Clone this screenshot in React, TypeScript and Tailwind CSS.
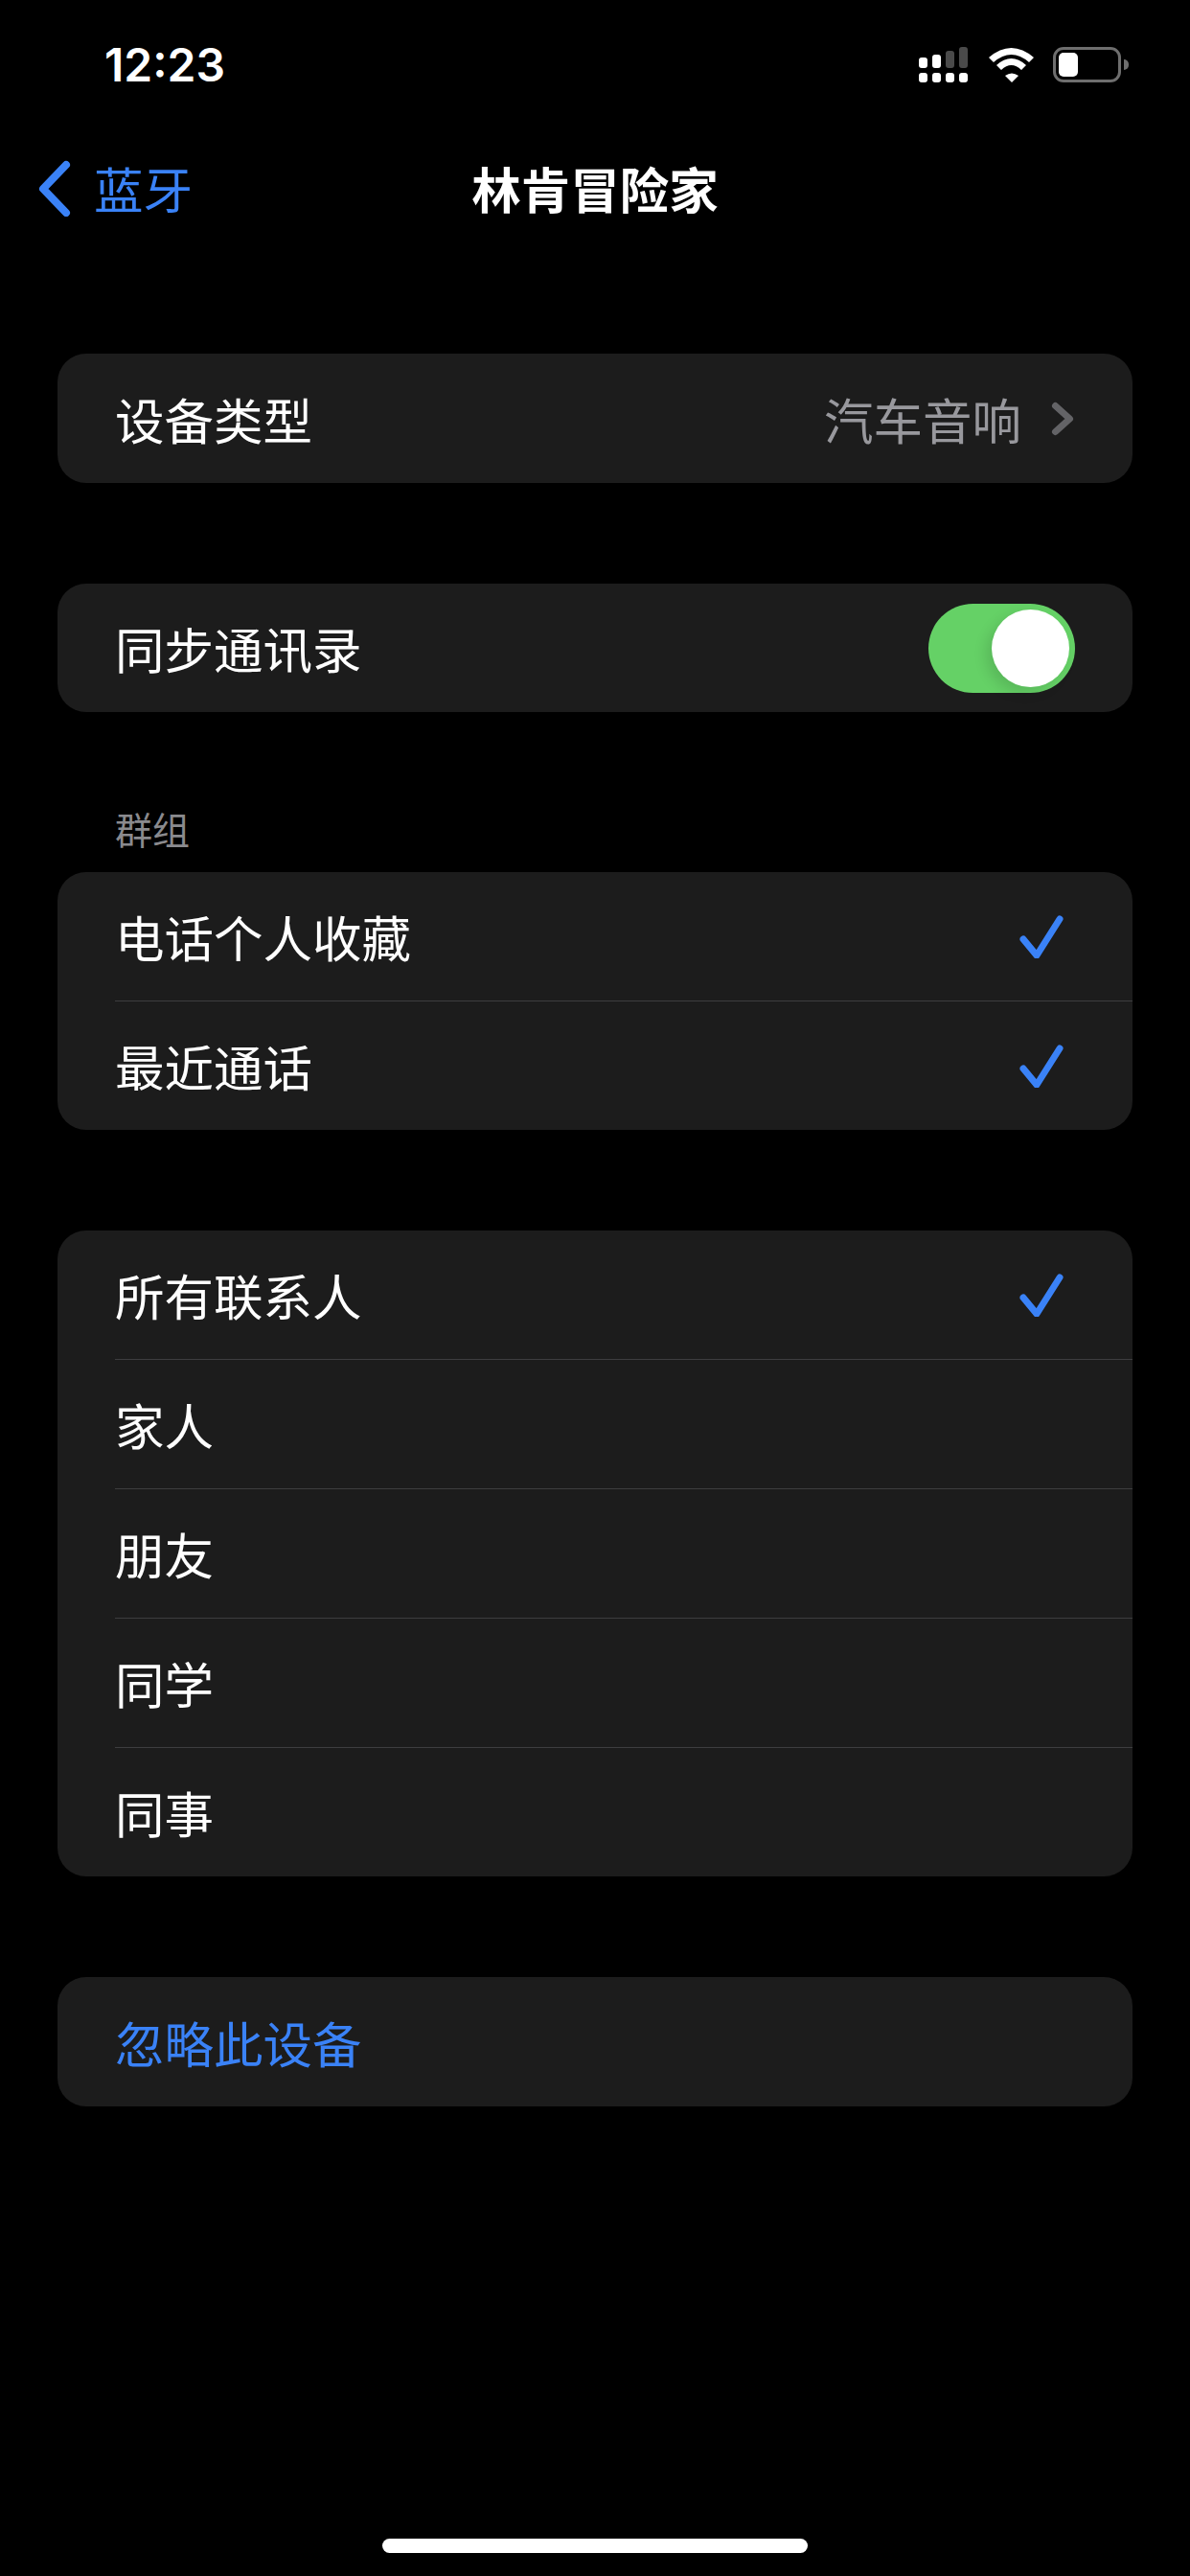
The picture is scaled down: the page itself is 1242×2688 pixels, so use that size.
const cjk = { fontFamily: '"Noto Sans CJK SC", "Noto Sans", sans-serif' };

function Check() {
  return (
    <svg width="50" height="46" viewBox="0 0 50 46" fill="none">
      <path d="M6 26 L20 43 L44 5" stroke="#3a82f7" strokeWidth="7" strokeLinecap="round" strokeLinejoin="round" />
    </svg>
  );
}

function Row({ label, check, last }: { label: string; check?: boolean; last?: boolean }) {
  return (
    <div className="pl-[60px]">
      <div className={`flex items-center justify-between pr-[70px] ${last ? "h-[134px]" : "h-[135px] border-b border-[#3d3d3f]"}`}>
        <span className="text-[51.5px] leading-none text-white">{label}</span>
        {check && <Check />}
      </div>
    </div>
  );
}

function SignalBars() {
  const top = [
    { h: "h-[11px]", c: "bg-white" },
    { h: "h-[14px]", c: "bg-white" },
    { h: "h-[18px]", c: "bg-[#4a4a4a]" },
    { h: "h-[22px]", c: "bg-[#4a4a4a]" },
  ];
  return (
    <div className="flex gap-[5px]">
      {top.map((b, i) => (
        <div key={i} className="flex w-[9px] flex-col justify-end gap-[5px]">
          <div className={`w-[9px] rounded-[3px] ${b.h} ${b.c}`} />
          <div className="h-[10px] w-[9px] rounded-[3px] bg-white" />
        </div>
      ))}
    </div>
  );
}

export default function App() {
  return (
    <div className="flex h-[2688px] w-[1242px] flex-col overflow-hidden bg-black" style={cjk}>
      <div className="flex h-[135px] items-center justify-between pl-[109px] pr-[64px]">
        <span className="text-[48px] font-semibold leading-none text-white" style={{ fontFamily: "Inter, sans-serif" }}>12:23</span>
        <div className="flex items-center">
          <SignalBars />
          <svg className="ml-[22px]" width="47" height="36" viewBox="0 0 47 36">
            <path d="M0 10 Q23.5 -10 47 10 L42 15 Q23.5 -1 5 15 Z" fill="#fff" />
            <path d="M8 18 Q23.5 4 39 18 L34 23 Q23.5 13 13 23 Z" fill="#fff" />
            <path d="M17 29 Q24 24 31 29 L24 36 Z" fill="#fff" />
          </svg>
          <div className="ml-[20px] flex items-center">
            <div className="flex h-[37px] w-[71px] items-center rounded-[11px] border-[3px] border-[#6e6e6e] pl-[3px]">
              <div className="h-[25px] w-[20px] rounded-[5px] bg-white" />
            </div>
            <div className="ml-[3px] h-[11px] w-[5px] rounded-r-full bg-[#6e6e6e]" />
          </div>
        </div>
      </div>

      <div className="grid h-[122px] grid-cols-[1fr_auto_1fr] items-center">
        <div className="flex items-center pl-[38px]">
          <svg width="38" height="60" viewBox="0 0 38 60" fill="none">
            <path d="M31 6 L7 31 L31 56" stroke="#3a82f7" strokeWidth="8" strokeLinecap="round" strokeLinejoin="round" />
          </svg>
          <span className="ml-[22px] text-[51.5px] leading-none text-[#3a82f7]">蓝牙</span>
        </div>
        <span className="text-[51.5px] font-bold leading-none text-white">林肯冒险家</span>
        <div />
      </div>

      <div className="flex flex-col px-[60px] pt-[112px]">
        <div className="flex h-[135px] items-center justify-between rounded-[30px] bg-[#1c1c1c] pl-[60px] pr-[60px]">
          <span className="text-[51.5px] leading-none text-white">设备类型</span>
          <div className="flex items-center">
            <span className="text-[51.5px] leading-none text-[#98989d]">汽车音响</span>
            <svg className="ml-[30px]" width="26" height="38" viewBox="0 0 26 38" fill="none">
              <path d="M5.5 5.5 L20.5 19 L5.5 32.5" stroke="#636366" strokeWidth="7" strokeLinecap="round" strokeLinejoin="round" />
            </svg>
          </div>
        </div>

        <div className="mt-[105px] flex h-[134px] items-center justify-between rounded-[30px] bg-[#1c1c1c] pl-[60px] pr-[60px]">
          <span className="text-[51.5px] leading-none text-white">同步通讯录</span>
          <div className="flex h-[93px] w-[153px] items-center justify-end rounded-full bg-[#65d166] pr-[6px]">
            <div className="h-[81px] w-[81px] rounded-full bg-white shadow-[-6px_6px_14px_rgba(0,0,0,0.12)]" />
          </div>
        </div>

        <div className="flex h-[167px] items-end pb-[26px] pl-[60px]">
          <span className="text-[39px] leading-none text-[#8a8a8e]">群组</span>
        </div>

        <div className="overflow-hidden rounded-[30px] bg-[#1c1c1c]">
          <Row label="电话个人收藏" check />
          <Row label="最近通话" check last />
        </div>

        <div className="mt-[105px] overflow-hidden rounded-[30px] bg-[#1c1c1c]">
          <Row label="所有联系人" check />
          <Row label="家人" />
          <Row label="朋友" />
          <Row label="同学" />
          <Row label="同事" last />
        </div>

        <div className="mt-[105px] flex h-[135px] items-center rounded-[30px] bg-[#1c1c1c] pl-[60px]">
          <span className="text-[51.5px] leading-none text-[#3a82f7]">忽略此设备</span>
        </div>
      </div>

      <div className="mt-auto flex justify-center pb-[24px]">
        <div className="h-[15px] w-[444px] rounded-full bg-white" />
      </div>
    </div>
  );
}
